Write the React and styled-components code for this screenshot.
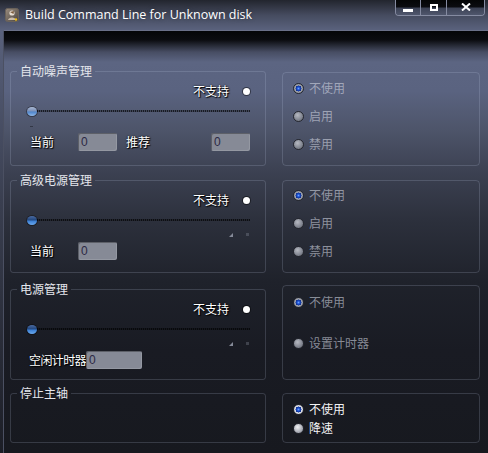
import React from "react";
import styled, { createGlobalStyle } from "styled-components";

const GlobalStyle = createGlobalStyle`
  html, body {
    margin: 0;
    padding: 0;
    background: #181a22;
  }
  body {
    font-family: "Noto Sans CJK SC", "Noto Sans", sans-serif;
    font-size: 12px;
  }
`;

const Window = styled.div`
  width: 488px;
  height: 453px;
  overflow: hidden;
  display: flex;
  flex-direction: column;
  background: linear-gradient(to bottom, #2a2e3a 0px, #59617c 30px, #3a3f50 200px, #1c1e26 453px);
`;

const TitleBar = styled.div`
  height: 30px;
  flex: none;
  display: flex;
  align-items: flex-start;
  padding-left: 5px;
  box-sizing: border-box;
  background: linear-gradient(to bottom, #22252e 0px, #2e323e 5px, #454b5f 15px, #5a627d 30px);
`;

const TitleIcon = styled.svg`
  margin-top: 8px;
  flex: none;
`;

const TitleText = styled.div`
  flex: 1;
  margin-left: 6px;
  margin-top: 7px;
  line-height: 16px;
  font-family: "Open Sans", "Liberation Sans", sans-serif;
  font-size: 12.5px;
  color: #ffffff;
  text-shadow: 0 0 4px rgba(0, 0, 0, 0.35);
  white-space: nowrap;
`;

const CaptionButtons = styled.div`
  display: flex;
  height: 16px;
  margin-right: 3px;
  box-sizing: border-box;
  border: 1px solid #858ba1;
  border-top: none;
  border-radius: 0 0 4px 4px;
  overflow: hidden;
`;

const CaptionButton = styled.div`
  width: ${(p) => p.$w}px;
  display: flex;
  align-items: center;
  justify-content: center;
  background: linear-gradient(to bottom, #040506 0px, #0b0c10 7px, #3c4255 8px, #4f566c 15px);
  & + & {
    border-left: 1px solid #858ba1;
  }
`;

const MinGlyph = styled.span`
  width: 10px;
  height: 3px;
  margin-top: 5px;
  background: #ffffff;
`;

const MaxGlyph = styled.span`
  width: 8px;
  height: 7px;
  box-sizing: border-box;
  border: 2px solid #ffffff;
  margin-top: -1px;
`;

const Client = styled.div`
  flex: 1;
  margin-left: 3px;
  border-left: 1px solid #4b5062;
  border-top: 1px solid #6a7088;
  padding: 33px 0 0 6px;
  display: flex;
  flex-direction: column;
  background: linear-gradient(
    to bottom,
    #040507 0px,
    #0b0c10 9px,
    #474d63 21px,
    #5c6582 31px,
    #5a6380 60px,
    #4d5469 100px,
    #3c4152 140px,
    #2c303c 190px,
    #1f222b 250px,
    #191b23 320px,
    #17191f 100%
  );
`;

const Row = styled.div`
  display: grid;
  grid-template-columns: 256px 198px;
  column-gap: 16px;
  align-items: start;
  margin-top: ${(p) => p.$top || 0}px;
`;

const boxBorder = "rgba(200, 210, 240, 0.18)";

const Group = styled.fieldset`
  margin: 0;
  padding: 6px 0 0 0;
  min-inline-size: 0;
  box-sizing: border-box;
  height: ${(p) => p.$h}px;
  border: 1px solid ${boxBorder};
  border-radius: 3px;
`;

const Legend = styled.legend`
  margin-left: 6px;
  padding: 0 3px;
  line-height: 14px;
  font-size: 12px;
  color: #e4e6ec;
`;

const StatusRow = styled.div`
  display: flex;
  justify-content: flex-end;
  align-items: center;
  gap: 14px;
  height: 14px;
  padding-right: 15px;
`;

const LightText = styled.span`
  color: #ffffff;
  line-height: 14px;
  font-size: 12px;
  white-space: nowrap;
  text-shadow: 0 0 2px #000000, 1px 1px 1px #000000;
`;

const StatusDot = styled.span`
  width: 7px;
  height: 7px;
  border-radius: 50%;
  background: #ffffff;
  box-shadow: 0 0 0 1px rgba(0, 0, 0, 0.45);
`;

const Slider = styled.div`
  display: flex;
  align-items: center;
  height: 10px;
  margin: 8px 15px 0 16px;
`;

const Thumb = styled.span`
  flex: none;
  width: 10px;
  height: 9px;
  border-radius: 50%;
  position: relative;
  z-index: 1;
  background: ${(p) =>
    p.$light
      ? "linear-gradient(to bottom, #a9b8d2 0%, #7b90b8 45%, #4f86cc 55%, #8fb6e6 100%)"
      : "linear-gradient(to bottom, #4a6aa0 0%, #22477f 45%, #3b7fd4 55%, #6aa8ec 100%)"};
  box-shadow: 0 0 0 1px rgba(0, 0, 0, 0.35);
`;

const Track = styled.span`
  flex: 1;
  height: 2px;
  margin-left: -4px;
  background: repeating-linear-gradient(
    90deg,
    rgba(0, 0, 0, 0.7) 0px,
    rgba(0, 0, 0, 0.7) 1px,
    rgba(0, 0, 0, 0.25) 1px,
    rgba(0, 0, 0, 0.25) 2px
  );
`;

const TickRow = styled.div`
  display: flex;
  align-items: flex-end;
  justify-content: ${(p) => (p.$end ? "flex-end" : "flex-start")};
  height: 6px;
  margin: 6px 16px 0 19px;
`;

const TickMark = styled.span`
  width: 3px;
  height: 1px;
  background: rgba(0, 0, 0, 0.35);
  margin-bottom: 1px;
`;

const TickTriangle = styled.span`
  width: 0;
  height: 0;
  border-left: 4px solid transparent;
  border-bottom: 4px solid #858a98;
  margin-right: 13px;
`;

const TickPlus = styled.span`
  width: 3px;
  height: 3px;
  background: rgba(150, 155, 170, 0.3);
  margin-bottom: 1px;
`;

const FieldRow = styled.div`
  display: flex;
  align-items: center;
  height: 18px;
  margin-top: 5px;
  padding-left: ${(p) => p.$pad || 19}px;
`;

const FieldLabel = styled(LightText)`
  width: ${(p) => p.$w}px;
  margin-left: ${(p) => p.$ml || 0}px;
  letter-spacing: ${(p) => p.$ls || 0}px;
  flex: none;
`;

const ValueBox = styled.div`
  width: ${(p) => p.$w}px;
  height: 18px;
  flex: none;
  box-sizing: border-box;
  padding-left: 3px;
  background: #868a96;
  border-radius: 2px;
  box-shadow: inset 1px 1px 0 rgba(0, 0, 0, 0.3), inset -1px -1px 0 rgba(255, 255, 255, 0.12);
  color: #2c2944;
  font-family: "Liberation Sans", Arial, sans-serif;
  font-size: 12px;
  line-height: 18px;
`;

const OptionBox = styled.div`
  margin-top: ${(p) => p.$top}px;
  height: ${(p) => p.$h}px;
  box-sizing: border-box;
  border: 1px solid ${boxBorder};
  border-radius: 4px;
  padding: ${(p) => p.$pad}px 0 0 10px;
  display: flex;
  flex-direction: column;
  gap: ${(p) => p.$gap}px;
`;

const RadioItem = styled.div`
  display: flex;
  align-items: center;
  gap: 5px;
  height: 14px;
  line-height: 14px;
  font-size: 12px;
  white-space: nowrap;
  color: ${(p) => (p.$enabled ? "#f2f2f4" : "rgba(210, 214, 225, 0.6)")};
`;

const RadioDot = styled.span`
  flex: none;
  width: 11px;
  height: 11px;
  box-sizing: border-box;
  border-radius: 50%;
  border: 1px solid #25272f;
  background: ${(p) =>
    p.$checked
      ? `radial-gradient(circle at 50% 50%, #6aa0ff 0px, #1a4fd0 1.5px, #0b2c8a 2.8px, ${
          p.$enabled ? "#e8e9ee" : "#a6a9b2"
        } 3.2px, ${p.$enabled ? "#9a9ea8" : "#6c707a"} 100%)`
      : `radial-gradient(circle at 40% 35%, ${p.$enabled ? "#f0f1f4" : "#b6b9c1"} 0px, ${
          p.$enabled ? "#b0b3bb" : "#858994"
        } 55%, ${p.$enabled ? "#80848e" : "#5c606a"} 100%)`};
`;

const Radio = ({ checked, enabled, children }) => (
  <RadioItem $enabled={enabled}>
    <RadioDot $checked={checked} $enabled={enabled} />
    {children}
  </RadioItem>
);

const AppIcon = () => (
  <TitleIcon width="14" height="14" viewBox="0 0 14 14">
    <defs>
      <linearGradient id="ig" x1="0" y1="0" x2="1" y2="1">
        <stop offset="0" stopColor="#9a8c7e" />
        <stop offset="1" stopColor="#4b4540" />
      </linearGradient>
    </defs>
    <rect x="0.5" y="0.5" width="13" height="13" rx="2" fill="url(#ig)" stroke="#6a625a" />
    <circle cx="7" cy="5" r="2.6" fill="#e6ddd2" />
    <path d="M3 12 C3.5 8.5 10.5 8.5 11 12 Z" fill="#c9bba9" />
    <path d="M5 4 L9 3 L8.5 6 Z" fill="#7a5a3a" />
    <circle cx="11" cy="11.5" r="1.2" fill="#f2c21a" />
  </TitleIcon>
);

const CloseGlyph = () => (
  <svg width="10" height="8" viewBox="0 0 10 8" style={{ marginTop: -1 }}>
    <path d="M1 0.5 L9 7.5 M9 0.5 L1 7.5" stroke="#ffffff" strokeWidth="2" />
  </svg>
);

const Status = () => (
  <StatusRow>
    <LightText>不支持</LightText>
    <StatusDot />
  </StatusRow>
);

export default function App() {
  return (
    <>
      <GlobalStyle />
      <Window>
        <TitleBar>
          <AppIcon />
          <TitleText>Build Command Line for Unknown disk</TitleText>
          <CaptionButtons>
            <CaptionButton $w={24}>
              <MinGlyph />
            </CaptionButton>
            <CaptionButton $w={25}>
              <MaxGlyph />
            </CaptionButton>
            <CaptionButton $w={37}>
              <CloseGlyph />
            </CaptionButton>
          </CaptionButtons>
        </TitleBar>

        <Client>
          <Row>
            <Group $h={102}>
              <Legend>自动噪声管理</Legend>
              <Status />
              <Slider>
                <Thumb $light />
                <Track />
              </Slider>
              <TickRow>
                <TickMark />
              </TickRow>
              <FieldRow>
                <FieldLabel $w={48}>当前</FieldLabel>
                <ValueBox $w={39}>0</ValueBox>
                <FieldLabel $w={85} $ml={9}>
                  推荐
                </FieldLabel>
                <ValueBox $w={39}>0</ValueBox>
              </FieldRow>
            </Group>
            <OptionBox $top={8} $h={94} $pad={8} $gap={14}>
              <Radio checked>不使用</Radio>
              <Radio>启用</Radio>
              <Radio>禁用</Radio>
            </OptionBox>
          </Row>

          <Row $top={7}>
            <Group $h={100}>
              <Legend>高级电源管理</Legend>
              <Status />
              <Slider>
                <Thumb />
                <Track />
              </Slider>
              <TickRow $end>
                <TickTriangle />
                <TickPlus />
              </TickRow>
              <FieldRow>
                <FieldLabel $w={48}>当前</FieldLabel>
                <ValueBox $w={39}>0</ValueBox>
              </FieldRow>
            </Group>
            <OptionBox $top={7} $h={93} $pad={7} $gap={14}>
              <Radio checked>不使用</Radio>
              <Radio>启用</Radio>
              <Radio>禁用</Radio>
            </OptionBox>
          </Row>

          <Row $top={9}>
            <Group $h={98}>
              <Legend>电源管理</Legend>
              <Status />
              <Slider>
                <Thumb />
                <Track />
              </Slider>
              <TickRow $end>
                <TickTriangle />
                <TickPlus />
              </TickRow>
              <FieldRow $pad={18}>
                <FieldLabel $w={57} $ls={-0.6}>
                  空闲计时器
                </FieldLabel>
                <ValueBox $w={56}>0</ValueBox>
              </FieldRow>
            </Group>
            <OptionBox $top={3} $h={95} $pad={9} $gap={27}>
              <Radio checked>不使用</Radio>
              <Radio>设置计时器</Radio>
            </OptionBox>
          </Row>

          <Row $top={6}>
            <Group $h={57}>
              <Legend>停止主轴</Legend>
            </Group>
            <OptionBox $top={7} $h={50} $pad={8} $gap={5}>
              <Radio checked enabled>
                不使用
              </Radio>
              <Radio enabled>降速</Radio>
            </OptionBox>
          </Row>
        </Client>
      </Window>
    </>
  );
}
